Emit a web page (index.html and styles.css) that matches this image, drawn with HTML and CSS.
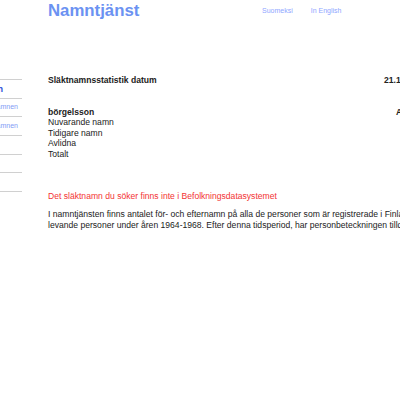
FILE: index.html
```html
<!DOCTYPE html>
<html lang="sv">
<head>
<meta charset="utf-8">
<title>Namntjänst</title>
<link rel="stylesheet" href="styles.css">
</head>
<body>
<div class="page">
  <header class="top">
    <h1 class="logo">Namntjänst</h1>
    <nav class="lang">
      <a href="#" class="lang-link">Suomeksi</a>
      <a href="#" class="lang-link">In English</a>
    </nav>
  </header>
  <div class="body">
    <aside class="side">
      <ul class="menu">
        <li class="menu-item current"><a href="#">Släktnamn</a></li>
        <li class="menu-item"><a href="#">Vanligaste förnamnen</a></li>
        <li class="menu-item"><a href="#">Vanligaste släktnamnen</a></li>
        <li class="menu-item"><a href="#"></a></li>
        <li class="menu-item"><a href="#"></a></li>
        <li class="menu-item"><a href="#"></a></li>
      </ul>
    </aside>
    <main class="main">
      <div class="row title-row">
        <span class="title">Släktnamnsstatistik datum</span>
        <span class="date">21.11.2023</span>
      </div>
      <div class="stats">
        <div class="row">
          <span class="name">börgelsson</span>
          <span class="count-head">Antal</span>
        </div>
        <div class="row"><span>Nuvarande namn</span></div>
        <div class="row"><span>Tidigare namn</span></div>
        <div class="row"><span>Avlidna</span></div>
        <div class="row"><span>Totalt</span></div>
      </div>
      <p class="error">Det släktnamn du söker finns inte i Befolkningsdatasystemet</p>
      <p class="info">I namntjänsten finns antalet för- och efternamn på alla de personer som är registrerade i Finlands befolkningsdatasystem<br>levande personer under åren 1964-1968. Efter denna tidsperiod, har personbeteckningen tilldelats</p>
    </main>
  </div>
</div>
</body>
</html>
```
FILE: styles.css
```css
html, body {
  margin: 0;
  padding: 0;
  background: #fff;
  overflow: hidden;
}
body {
  font-family: "Liberation Sans", Arial, sans-serif;
  font-size: 8.58px;
  line-height: 10.6px;
  color: #222;
}
.page {
  width: 800px;
}
.top {
  display: flex;
  align-items: flex-start;
  height: 60px;
  padding-left: 48px;
}
.logo {
  margin: 0;
  padding-top: 1px;
  font-size: 16.8px;
  line-height: 20px;
  font-weight: bold;
  color: #6b92f2;
  width: 214px;
}
.lang {
  display: flex;
  gap: 18px;
  padding-top: 6px;
}
.lang-link {
  font-size: 7px;
  line-height: 9px;
  color: #8fa6ff;
  text-decoration: none;
}
.body {
  display: flex;
}
.side {
  width: 22px;
  overflow: hidden;
  margin-top: 19px;
  flex: none;
}
.menu {
  list-style: none;
  margin: 0 0 0 -118px;
  padding: 0;
  width: 140px;
  border-top: 1px solid #d0d0d0;
}
.menu-item {
  height: 17.7px;
  border-bottom: 1px solid #d0d0d0;
  display: flex;
  align-items: center;
  justify-content: flex-end;
}
.menu-item a {
  text-decoration: none;
  font-size: 7px;
  color: #7f9cf5;
  padding-right: 4px;
}
.menu-item.current a {
  font-size: 8.58px;
  font-weight: bold;
  color: #2447d8;
  padding-right: 19px;
}
.main {
  margin-left: 26px;
  padding-top: 15px;
  width: 700px;
}
.row {
  display: grid;
  grid-template-columns: 336px auto;
}
.title-row {
  font-weight: bold;
  margin-bottom: 21px;
}
.stats .row:first-child {
  font-weight: bold;
  grid-template-columns: 348px auto;
}
.error {
  color: #f33333;
  margin: 31px 0 0 0;
}
.info {
  margin: 8px 0 0 0;
  white-space: nowrap;
}
```
